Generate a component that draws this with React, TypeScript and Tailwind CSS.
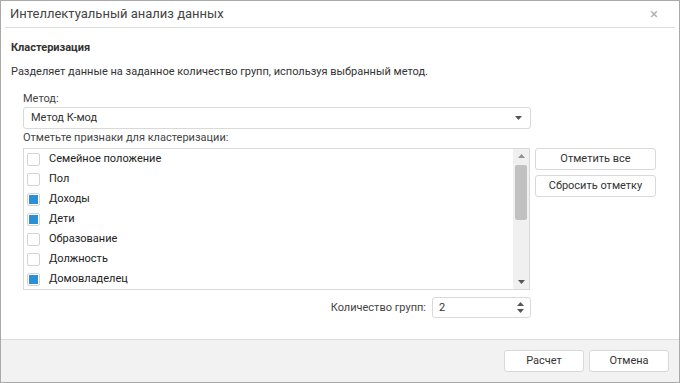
import { useState } from 'react';

const FEATURES: { label: string; checked: boolean }[] = [
  { label: 'Семейное положение', checked: false },
  { label: 'Пол', checked: false },
  { label: 'Доходы', checked: true },
  { label: 'Дети', checked: true },
  { label: 'Образование', checked: false },
  { label: 'Должность', checked: false },
  { label: 'Домовладелец', checked: true },
];

function Caret({ up = false }: { up?: boolean }) {
  return (
    <svg width="7" height="4" viewBox="0 0 7 4" className="block">
      <path d={up ? 'M0 4 L3.5 0 L7 4 Z' : 'M0 0 L7 0 L3.5 4 Z'} fill="#555" />
    </svg>
  );
}

function Checkbox({ checked }: { checked: boolean }) {
  return (
    <span className="flex h-[13px] w-[13px] shrink-0 items-center justify-center rounded-[2px] border border-[#d4d4d4] bg-white">
      {checked && <span className="h-[9px] w-[9px] bg-[#2a8fd4]" />}
    </span>
  );
}

function Btn({ children, className = '' }: { children: string; className?: string }) {
  return (
    <button
      className={`flex h-[22px] items-center justify-center rounded-[3px] border border-[#d9d9d9] bg-white text-[11px] text-[#333] ${className}`}
    >
      {children}
    </button>
  );
}

export default function App() {
  const [items] = useState(FEATURES);

  return (
    <div className="flex h-[383px] w-[680px] flex-col border border-[#a9a9a9] bg-white font-['Roboto',sans-serif] text-[#333]">
      {/* title */}
      <div className="mx-[4px] flex h-[27px] shrink-0 items-center justify-between border-b border-[#dcdcdc] pl-[5px] pr-[17px]">
        <span className="text-[13px] text-[#444]">Интеллектуальный анализ данных</span>
        <span className="text-[15px] leading-none text-[#b0b0b0]">×</span>
      </div>

      <div className="flex flex-1 flex-col pl-[10px] pr-[23px] text-[11px] leading-[14px]">
        <div className="mt-[13px] font-bold text-[#333]">Кластеризация</div>
        <div className="mt-[10px] text-[#333]">
          Разделяет данные на заданное количество групп, используя выбранный метод.
        </div>

        <div className="ml-[12px] mt-[13px] flex flex-col">
          <div className="text-[#444]">Метод:</div>
          <div className="mt-[1px] flex h-[22px] w-[508px] items-center justify-between rounded-[3px] border border-[#d9d9d9] pl-[7px] pr-[8px]">
            <span>Метод К-мод</span>
            <Caret />
          </div>
          <div className="mt-[2px] text-[#444]">Отметьте признаки для кластеризации:</div>

          <div className="mt-[3px] flex gap-[5px]">
            <div className="flex h-[142px] w-[508px] border border-[#d9d9d9]">
              <div className="flex flex-1 flex-col pl-[3px]">
                {items.map((it) => (
                  <div key={it.label} className="flex h-[20px] items-center gap-[9px] text-[#222]">
                    <Checkbox checked={it.checked} />
                    <span>{it.label}</span>
                  </div>
                ))}
              </div>
              <div className="flex w-[16px] flex-col items-center bg-[#f0f0f0]">
                <div className="flex h-[14px] items-center">
                  <span className="opacity-60">
                    <Caret up />
                  </span>
                </div>
                <div className="mt-[2px] h-[55px] w-[12px] rounded-[2px] bg-[#c1c1c1]" />
                <div className="flex-1" />
                <div className="flex h-[14px] items-center">
                  <Caret />
                </div>
              </div>
            </div>
            <div className="flex flex-col gap-[5px]">
              <Btn className="w-[121px]">Отметить все</Btn>
              <Btn className="w-[121px]">Сбросить отметку</Btn>
            </div>
          </div>

          <div className="mt-[7px] flex w-[508px] items-center justify-end gap-[6px]">
            <span className="text-[#444]">Количество групп:</span>
            <div className="flex h-[21px] w-[99px] items-center justify-between rounded-[3px] border border-[#d9d9d9] pl-[6px] pr-[6px]">
              <span>2</span>
              <span className="flex flex-col gap-[3px]">
                <Caret up />
                <Caret />
              </span>
            </div>
          </div>
        </div>
      </div>

      {/* footer */}
      <div className="flex h-[43px] shrink-0 items-center justify-end gap-[5px] border-t border-[#dcdcdc] bg-[#f2f2f2] pr-[10px]">
        <Btn className="w-[80px]">Расчет</Btn>
        <Btn className="w-[80px]">Отмена</Btn>
      </div>
    </div>
  );
}
